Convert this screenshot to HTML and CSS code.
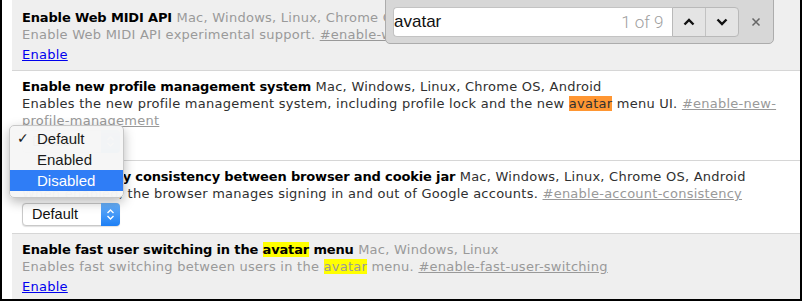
FILE: index.html
```html
<!DOCTYPE html>
<html>
<head>
<meta charset="utf-8">
<link rel="stylesheet" href="styles.css">
</head>
<body>
<div class="frame">
  <div class="flags">
    <div class="flag flag--off flag--first">
      <div class="flag-title"><b>Enable Web MIDI API</b> <span class="platforms">Mac, Windows, Linux, Chrome OS, Android</span></div>
      <div class="flag-desc">Enable Web MIDI API experimental support. <a class="perma" href="#">#enable-web-midi</a></div>
      <a class="action" href="#">Enable</a>
    </div>
    <div class="flag">
      <div class="flag-title"><b>Enable new profile management system</b> <span class="platforms">Mac, Windows, Linux, Chrome OS, Android</span></div>
      <div class="flag-desc">Enables the new profile management system, including profile lock and the new <mark class="hit hit--active">avatar</mark> menu UI. <a class="perma" href="#">#enable-new-profile-management</a></div>
      <div class="select"><span class="select-label">Default</span><span class="stepper"><svg width="9" height="13" viewBox="0 0 9 13"><polyline points="1.5,5 4.5,2 7.5,5" fill="none" stroke="#fff" stroke-width="1.4"/><polyline points="1.5,8 4.5,11 7.5,8" fill="none" stroke="#fff" stroke-width="1.4"/></svg></span></div>
    </div>
    <div class="flag">
      <div class="flag-title"><b>Enable identity consistency between browser and cookie jar</b> <span class="platforms">Mac, Windows, Linux, Chrome OS, Android</span></div>
      <div class="flag-desc">When enabled, the browser manages signing in and out of Google accounts. <a class="perma" href="#">#enable-account-consistency</a></div>
      <div class="select"><span class="select-label">Default</span><span class="stepper"><svg width="9" height="13" viewBox="0 0 9 13"><polyline points="1.5,5 4.5,2 7.5,5" fill="none" stroke="#fff" stroke-width="1.4"/><polyline points="1.5,8 4.5,11 7.5,8" fill="none" stroke="#fff" stroke-width="1.4"/></svg></span></div>
    </div>
    <div class="flag flag--off">
      <div class="flag-title"><b>Enable fast user switching in the <mark class="hit">avatar</mark> menu</b> <span class="platforms">Mac, Windows, Linux</span></div>
      <div class="flag-desc">Enables fast switching between users in the <mark class="hit">avatar</mark> menu. <a class="perma" href="#">#enable-fast-user-switching</a></div>
      <a class="action" href="#">Enable</a>
    </div>
  </div>

  <div class="findbar">
    <div class="find-field">
      <span class="find-text">avatar</span>
      <span class="find-count">1 of 9</span>
    </div>
    <div class="find-nav">
      <span class="find-btn"><svg width="12" height="8" viewBox="0 0 12 8"><polyline points="1.5,6.5 6,2 10.5,6.5" fill="none" stroke="#111" stroke-width="2.4"/></svg></span>
      <span class="find-btn"><svg width="12" height="8" viewBox="0 0 12 8"><polyline points="1.5,1.5 6,6 10.5,1.5" fill="none" stroke="#111" stroke-width="2.4"/></svg></span>
    </div>
    <span class="find-close"><svg width="10" height="10" viewBox="0 0 10 10"><path d="M1.5 1.5 L8.5 8.5 M8.5 1.5 L1.5 8.5" stroke="#666" stroke-width="1.5"/></svg></span>
  </div>

  <div class="popup">
    <div class="popup-item"><span class="check">✓</span>Default</div>
    <div class="popup-item">Enabled</div>
    <div class="popup-item popup-item--selected">Disabled</div>
  </div>
</div>
</body>
</html>
```
FILE: styles.css
```css
html, body {
  margin: 0;
  padding: 0;
  background: #fff;
}

.frame {
  position: relative;
  width: 802px;
  height: 301px;
  border: 2px solid #000;
  border-top: 0;
  padding-left: 10px;
  box-sizing: border-box;
  overflow: hidden;
  font-family: "DejaVu Sans", Verdana, sans-serif;
  font-size: 13px;
  letter-spacing: 0.25px;
  color: #303030;
}

.flags {
  display: flex;
  flex-direction: column;
}

.flag {
  padding: 7px 10px 7px 10px;
  border-top: 1px solid #d6d6d6;
  line-height: 17px;
}

.flag--first {
  border-top: 0;
  padding-top: 9px;
}

.flag--off {
  background: #efefef;
}

.flag-title b {
  color: #000;
  font-weight: bold;
  letter-spacing: -0.15px;
}

.flag--off .platforms,
.flag--off .flag-desc {
  color: #9a9a9a;
}

.perma {
  color: #999;
  text-decoration: underline;
}

.action {
  display: inline-block;
  margin-top: 3px;
  color: #0000ee;
  text-decoration: underline;
}

.hit {
  background: #ffff00;
  color: inherit;
  padding: 0;
}

.hit--active {
  background: #ff9632;
}

.select {
  margin-top: 1px;
  width: 98px;
  height: 23px;
  box-sizing: border-box;
  border: 1px solid #c9c9c9;
  border-radius: 4px;
  background: #fff;
  display: flex;
  align-items: center;
  justify-content: space-between;
  font-family: "Liberation Sans", Arial, sans-serif;
  font-size: 14.5px;
  letter-spacing: 0;
  color: #111;
  box-shadow: 0 0.5px 1px rgba(0,0,0,0.12);
}

.select-label {
  padding-left: 9px;
}

.stepper {
  width: 19px;
  height: 23px;
  margin: -1px -1px -1px 0;
  border-radius: 0 4px 4px 0;
  background: linear-gradient(#69b1fa, #1d7ff5);
  display: flex;
  align-items: center;
  justify-content: center;
}

/* find bar */
.findbar {
  position: absolute;
  left: 383px;
  top: -1px;
  width: 389px;
  height: 45px;
  box-sizing: border-box;
  background: #d7d7d7;
  border: 1px solid #acacac;
  border-radius: 0 0 5px 5px;
  display: flex;
  align-items: center;
  padding: 0 0 0 7px;
  font-family: "Liberation Sans", Arial, sans-serif;
  letter-spacing: 0;
}

.find-field {
  width: 283px;
  height: 30px;
  box-sizing: border-box;
  background: #fff;
  border: 1px solid #c3c3c3;
  border-right: 0;
  border-radius: 4px 0 0 4px;
  display: flex;
  align-items: center;
  justify-content: space-between;
  padding: 0 9px 0 0;
}

.find-text {
  font-size: 17px;
  color: #111;
}

.find-count {
  font-family: Roboto, "Liberation Sans", sans-serif;
  font-weight: 300;
  font-size: 17px;
  color: #a0a0a0;
}

.find-nav {
  display: flex;
  height: 30px;
  box-sizing: border-box;
  border: 1px solid #b9b9b9;
  border-radius: 0 4px 4px 0;
  background: #e4e4e4;
}

.find-btn {
  width: 32px;
  display: flex;
  align-items: center;
  justify-content: center;
}

.find-btn + .find-btn {
  border-left: 1px solid #c2c2c2;
}

.find-close {
  width: 34px;
  display: flex;
  justify-content: center;
  align-items: center;
}

/* popup menu */
.popup {
  position: absolute;
  left: 7px;
  top: 125px;
  width: 115px;
  height: 73px;
  box-sizing: border-box;
  padding: 2px 0 0 0;
  background: rgba(246, 246, 246, 0.98);
  border: 1px solid #c8c8c8;
  border-radius: 5px;
  box-shadow: 0 4px 12px rgba(0, 0, 0, 0.28);
  font-family: "Liberation Sans", Arial, sans-serif;
  font-size: 15px;
  letter-spacing: 0;
  color: #1a1a1a;
}

.popup-item {
  position: relative;
  height: 21px;
  line-height: 21px;
  padding-left: 27px;
}

.popup-item--selected {
  background: #2f7df6;
  color: #fff;
}

.check {
  position: absolute;
  left: 7px;
  top: 0;
  font-family: "DejaVu Sans", sans-serif;
  font-size: 14px;
}
```
